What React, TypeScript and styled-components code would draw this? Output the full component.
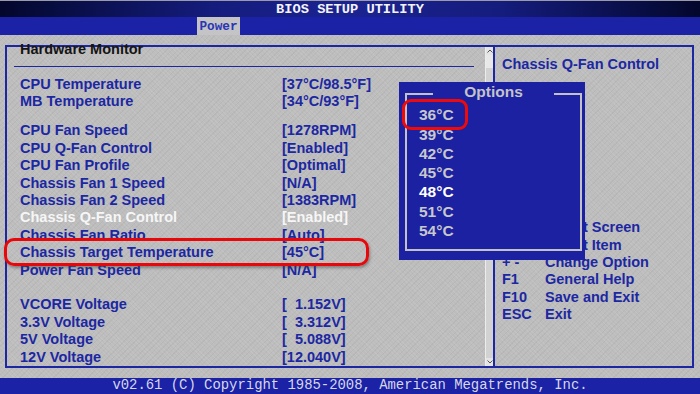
import React from "react";
import styled, { createGlobalStyle } from "styled-components";

const BLUE = "#1c27a2";
const BAR = "#1b22a6";
const GRAY = "#bdbdbd";
const SANS = `"Liberation Sans", Arial, sans-serif`;
const MONO = `"Liberation Mono", "DejaVu Sans Mono", monospace`;

interface MonitorRow {
  label: string;
  value: string;
  active?: boolean;
}

const GROUPS: { gap: number; rows: MonitorRow[] }[] = [
  {
    gap: 8.4,
    rows: [
      { label: "CPU Temperature", value: "[37°C/98.5°F]" },
      { label: "MB Temperature", value: "[34°C/93°F]" },
    ],
  },
  {
    gap: 12.2,
    rows: [
      { label: "CPU Fan Speed", value: "[1278RPM]" },
      { label: "CPU Q-Fan Control", value: "[Enabled]" },
      { label: "CPU Fan Profile", value: "[Optimal]" },
      { label: "Chassis Fan 1 Speed", value: "[N/A]" },
      { label: "Chassis Fan 2 Speed", value: "[1383RPM]" },
      { label: "Chassis Q-Fan Control", value: "[Enabled]", active: true },
      { label: "Chassis Fan Ratio", value: "[Auto]" },
      { label: "Chassis Target Temperature", value: "[45°C]" },
      { label: "Power Fan Speed", value: "[N/A]" },
    ],
  },
  {
    gap: 17.4,
    rows: [
      { label: "VCORE Voltage", value: "[  1.152V]" },
      { label: "3.3V Voltage", value: "[  3.312V]" },
      { label: "5V Voltage", value: "[  5.088V]" },
      { label: "12V Voltage", value: "[12.040V]" },
    ],
  },
];

const HELP_KEYS = [
  { key: "←→", text: "Select Screen" },
  { key: "↑↓", text: "Select Item" },
  { key: "+ -", text: "Change Option" },
  { key: "F1", text: "General Help" },
  { key: "F10", text: "Save and Exit" },
  { key: "ESC", text: "Exit" },
];

const OPTIONS = ["36°C", "39°C", "42°C", "45°C", "48°C", "51°C", "54°C"];
const SELECTED_OPTION = "48°C";

const GlobalStyle = createGlobalStyle`
  html, body {
    margin: 0;
    padding: 0;
    background: ${GRAY};
  }
  body {
    width: 700px;
    height: 394px;
    overflow: hidden;
  }
`;

const App: React.FC = () => {
  return (
    <>
      <GlobalStyle />
      <Screen>
        <TitleBar>BIOS SETUP UTILITY</TitleBar>
        <TabBar>
          <Tab>Power</Tab>
        </TabBar>

        <Main>
          <Frame>
            <LeftColumn>
              <HeadingClip>
                <Heading>Hardware Monitor</Heading>
              </HeadingClip>
              <Rule />
              {GROUPS.map((group, gi) => (
                <Group key={gi} $gap={group.gap}>
                  {group.rows.map(row => (
                    <Row key={row.label} $active={!!row.active}>
                      <span>{row.label}</span>
                      <Value>{row.value}</Value>
                    </Row>
                  ))}
                </Group>
              ))}
            </LeftColumn>

            <ScrollBar>
              <ScrollArrow>
                <svg width="6" height="4" viewBox="0 0 6 4">
                  <path d="M0.5 3.5 L3 1 L5.5 3.5" fill="none" stroke="#555" strokeWidth="1" />
                </svg>
              </ScrollArrow>
              <ScrollThumb />
              <ScrollTrack />
              <ScrollArrow>
                <svg width="6" height="4" viewBox="0 0 6 4">
                  <path d="M0.5 0.5 L3 3 L5.5 0.5" fill="none" stroke="#555" strokeWidth="1" />
                </svg>
              </ScrollArrow>
            </ScrollBar>

            <RightColumn>
              <ItemHelp>Chassis Q-Fan Control</ItemHelp>
              <HelpList>
                {HELP_KEYS.map(h => (
                  <HelpRow key={h.key}>
                    <span>{h.key}</span>
                    <span>{h.text}</span>
                  </HelpRow>
                ))}
              </HelpList>
            </RightColumn>
          </Frame>
        </Main>

        <Footer>v02.61 (C) Copyright 1985-2008, American Megatrends, Inc.</Footer>

        <Popup>
          <PopupBox>
            <PopupTitle>Options</PopupTitle>
            <OptionList>
              {OPTIONS.map(opt => (
                <OptionItem key={opt} $selected={opt === SELECTED_OPTION}>
                  {opt}
                </OptionItem>
              ))}
            </OptionList>
          </PopupBox>
        </Popup>

        <RowMark />
        <OptionMark />
      </Screen>
    </>
  );
};

export default App;

const Screen = styled.div`
  position: relative;
  display: flex;
  flex-direction: column;
  width: 700px;
  height: 394px;
  overflow: hidden;
  background-color: ${GRAY};
  background-image: repeating-linear-gradient(
      45deg,
      rgba(255, 255, 255, 0.07) 0 1px,
      transparent 1px 3px
    ),
    repeating-linear-gradient(-45deg, rgba(0, 0, 0, 0.035) 0 1px, transparent 1px 4px);
`;

const TitleBar = styled.div`
  height: 18px;
  display: flex;
  align-items: center;
  justify-content: center;
  padding-top: 1px;
  box-sizing: border-box;
  border-top: 1px solid #9a9aa8;
  background: linear-gradient(
    90deg,
    #03072c 0%,
    #141c7c 30%,
    #1b2392 50%,
    #141c7c 72%,
    #03072c 100%
  );
  color: #f4f4f8;
  font-family: ${MONO};
  font-weight: 700;
  font-size: 13.7px;
  line-height: 1;
`;

const TabBar = styled.div`
  height: 19px;
  display: flex;
  align-items: flex-end;
  background: ${BAR};
  padding-left: 197px;
`;

const Tab = styled.div`
  width: 43px;
  height: 18px;
  display: flex;
  align-items: center;
  justify-content: center;
  background: #c4c4c6;
  color: #2a36b4;
  font-family: ${MONO};
  font-weight: 700;
  font-size: 12.7px;
`;

const Main = styled.div`
  flex: 1;
  display: flex;
  padding: 10px 6px 10px 5px;
`;

const Frame = styled.div`
  flex: 1;
  display: flex;
  border: 2px solid ${BLUE};
`;

const LeftColumn = styled.div`
  width: 478px;
  display: flex;
  flex-direction: column;
  font-family: ${SANS};
  font-weight: 700;
  font-size: 14.5px;
  line-height: 17.4px;
  color: ${BLUE};
`;

const HeadingClip = styled.div`
  margin-top: -3px;
  height: 22px;
  overflow: hidden;
  padding-left: 13px;
`;

const Heading = styled.div`
  margin-top: -3.4px;
  color: #151515;
`;

const Rule = styled.div`
  height: 1px;
  margin: 0 11px 0 7px;
  background: ${BLUE};
`;

const Group = styled.div<{ $gap: number }>`
  margin-top: ${({ $gap }) => $gap}px;
  padding-left: 13px;
`;

const Row = styled.div<{ $active: boolean }>`
  display: grid;
  grid-template-columns: 262px 1fr;
  height: 17.4px;
  white-space: pre;
  color: ${({ $active }) => ($active ? "#f6f6f6" : BLUE)};
`;

const Value = styled.span`
  white-space: pre;
`;

const ScrollBar = styled.div`
  width: 8px;
  display: flex;
  flex-direction: column;
  background: #d2d2d2;
  border-left: 1px solid #ececec;
  box-sizing: border-box;
`;

const ScrollArrow = styled.div`
  height: 8px;
  display: flex;
  align-items: center;
  justify-content: center;
  background: #e4e4e4;
`;

const ScrollThumb = styled.div`
  height: 13px;
  background: #e8e8e8;
`;

const ScrollTrack = styled.div`
  flex: 1;
`;

const RightColumn = styled.div`
  flex: 1;
  display: flex;
  flex-direction: column;
  border-left: 2px solid ${BLUE};
  padding: 8.4px 0 0 7px;
  font-family: ${SANS};
  font-weight: 700;
  font-size: 14.5px;
  line-height: 17.4px;
  color: ${BLUE};
`;

const ItemHelp = styled.div``;

const HelpList = styled.div`
  margin-top: 146.3px;
`;

const HelpRow = styled.div`
  display: grid;
  grid-template-columns: 43px 1fr;
  height: 17.4px;
  white-space: nowrap;
`;

const Footer = styled.div`
  height: 17px;
  display: flex;
  align-items: center;
  justify-content: center;
  background: ${BAR};
  color: #d6d8e6;
  font-family: ${MONO};
  font-size: 13.9px;
  line-height: 1;
  white-space: pre;
`;

const Popup = styled.div`
  position: absolute;
  left: 399px;
  top: 82px;
  width: 186px;
  height: 178px;
  box-sizing: border-box;
  padding: 11px 3px 9px 6px;
  display: flex;
  background: #1b21a0;
  font-family: ${SANS};
  font-weight: 700;
  font-size: 15.5px;
`;

const PopupBox = styled.div`
  flex: 1;
  display: flex;
  flex-direction: column;
  border: 2px solid #c2c2c6;
`;

const PopupTitle = styled.div`
  align-self: center;
  margin-top: -12.5px;
  height: 17px;
  line-height: 17px;
  padding: 0 31px;
  background: #1b21a0;
  color: #c4c4c8;
`;

const OptionList = styled.div`
  margin-top: 5.8px;
  padding-left: 12px;
`;

const OptionItem = styled.div<{ $selected: boolean }>`
  height: 19.3px;
  line-height: 19.3px;
  color: ${({ $selected }) => ($selected ? "#ffffff" : "#c8c8cc")};
`;

const RowMark = styled.div`
  position: absolute;
  left: 4px;
  top: 238px;
  width: 365px;
  height: 28px;
  box-sizing: border-box;
  border: 3px solid #e8080c;
  border-radius: 10px;
  box-shadow: 1px 2px 3px rgba(60, 60, 60, 0.45);
`;

const OptionMark = styled.div`
  position: absolute;
  left: 402px;
  top: 99px;
  width: 66px;
  height: 31px;
  box-sizing: border-box;
  border: 3px solid #ee0a0a;
  border-radius: 9px;
`;
